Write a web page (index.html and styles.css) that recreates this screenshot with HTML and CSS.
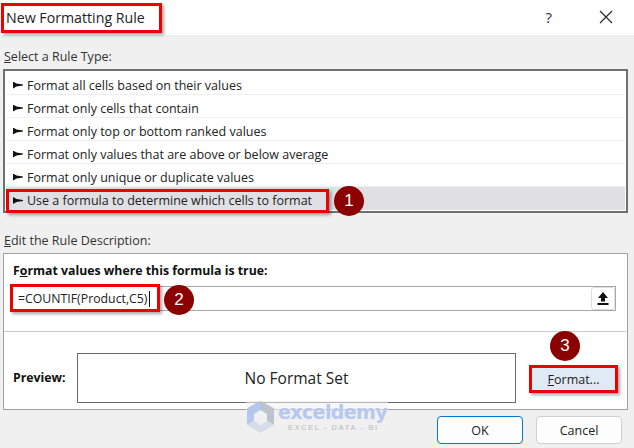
FILE: index.html
```html
<!DOCTYPE html>
<html lang="en">
<head>
<meta charset="utf-8">
<title>New Formatting Rule</title>
<link rel="stylesheet" href="styles.css">
</head>
<body>
<div class="dialog">
  <header class="titlebar">
    <span class="title">New Formatting Rule</span>
    <span class="help">?</span>
    <svg class="close" width="14" height="14" viewBox="0 0 14 14"><path d="M1 1L13 13M13 1L1 13" stroke="#222" stroke-width="1.1" fill="none"/></svg>
  </header>
  <main class="body">
    <div class="label"><u>S</u>elect a Rule Type:</div>
    <ul class="rules">
      <li class="rule"><span class="arrow"></span>Format all cells based on their values</li>
      <li class="rule"><span class="arrow"></span>Format only cells that contain</li>
      <li class="rule"><span class="arrow"></span>Format only top or bottom ranked values</li>
      <li class="rule"><span class="arrow"></span>Format only values that are above or below average</li>
      <li class="rule"><span class="arrow"></span>Format only unique or duplicate values</li>
      <li class="rule selected"><span class="arrow"></span>Use a formula to determine which cells to format</li>
    </ul>
    <div class="label second"><u>E</u>dit the Rule Description:</div>
    <section class="group">
      <div class="upper">
        <div class="strong">F<u>o</u>rmat values where this formula is true:</div>
        <div class="input">
          <span class="formula">=COUNTIF(Product,C5)<span class="caret"></span></span>
          <span class="collapse"><svg width="14" height="15" viewBox="0 0 14 15"><path d="M7 1L12 7H9V10.5H5V7H2Z M1.500 12H12.500V14H1.500Z" fill="#111"/></svg></span>
        </div>
      </div>
      <div class="lower">
        <div class="strong preview-label">Preview:</div>
        <div class="preview">No Format Set</div>
        <button class="format"><u>F</u>ormat...</button>
      </div>
    </section>
    <footer class="actions">
      <button class="btn default">OK</button>
      <button class="btn">Cancel</button>
    </footer>
  </main>
  <div class="mark box-title"></div>
  <div class="mark box-rule"></div>
  <div class="mark box-formula"></div>
  <div class="badge b1">1</div>
  <div class="badge b2">2</div>
  <div class="badge b3">3</div>
  <div class="watermark">
    <svg class="wm-logo" width="29" height="32" viewBox="0 0 29 32"><path d="M14.500 0L28 7.500V16L14.500 8.500L1 16V7.500Z" fill="#a9bfe8"/><path d="M1 7.500L14.500 0V9L8 13V20L1 24Z" fill="#b4c8ee"/><path d="M28 7.500V24L21 20V13L14.500 9V0Z" fill="#bcc3cf"/><path d="M1 24L8 20L14.500 24L21 20L28 24L14.500 32Z" fill="#d5dee8"/></svg>
    <div class="wm-text"><div class="wm-name">exceldemy</div><div class="wm-sub">EXCEL - DATA - BI</div></div>
  </div>
</div>
</body>
</html>
```
FILE: styles.css
```css
* { box-sizing: border-box; }
html, body { margin: 0; padding: 0; }
body { width: 634px; height: 448px; overflow: hidden; font-family: "Open Sans", "Noto Sans", sans-serif; font-size: 12.5px; color: #111; }
.dialog { position: relative; width: 634px; height: 448px; background: #f0f0f0; display: flex; flex-direction: column; }
.titlebar { height: 35px; background: #fff; display: flex; align-items: center; padding: 0 21px 1px 6px; flex: none; }
.title { font-size: 14.2px; flex: 1; color: #222; }
.help { font-size: 15px; margin-right: 47px; color: #333; }
.body { flex: 1; display: flex; flex-direction: column; padding: 0 6px 0 3px; }
.label { height: 34px; padding: 13px 0 0 1px; line-height: 18px; color: #333; }
.label.second { height: 40px; padding: 19px 0 0 1px; }
.rules { list-style: none; margin: 0; padding: 1px 0 3px; height: 144px; border: 2px solid #6e7072; background: #fff; }
.rule { height: 23px; border-bottom: 1px solid #efefef; margin: 0 1px; display: flex; align-items: center; padding: 4px 0 0 7px; color: #222; }
.rule.selected { background: #dfdfe4; border-bottom: 0; }
.arrow { width: 10px; height: 7px; margin-right: 4px; background: #111; clip-path: polygon(0 0, 35% 30%, 100% 42%, 100% 58%, 35% 70%, 0 100%); }
.group { height: 157px; border: 1px solid #a0a0a0; background: #fff; display: flex; flex-direction: column; }
.upper { height: 78px; border-bottom: 1px solid #ccc; margin-right: 1px; padding: 7px 10px 0 9px; }
.strong { font-weight: 700; font-size: 12.3px; color: #111; line-height: 20px; }
.input { margin-top: 5px; margin-left: -1px; height: 25px; border: 1px solid #a8a8a8; display: flex; align-items: center; justify-content: space-between; padding: 0 0 0 5px; }
.formula { display: flex; align-items: center; font-size: 12.3px; color: #222; }
.caret { display: block; width: 1px; height: 16px; background: #111; margin-left: 1px; }
.collapse { width: 24px; height: 23px; border: 1px solid #ddd; border-radius: 3px; background: #fff; display: flex; align-items: center; justify-content: center; }
.lower { flex: 1; display: flex; align-items: flex-start; padding: 21px 9px 0 9px; }
.preview-label { width: 64px; margin-top: 15px; }
.preview { width: 439px; height: 50px; border: 1px solid #6a6a6a; display: flex; align-items: center; justify-content: center; font-size: 15.5px; color: #222; margin-right: 13px; }
.format { width: 89px; height: 28px; margin-top: 12px; background: #dfeaf5; border: 3px solid #ee0000; box-shadow: 2px 2px 3px rgba(0,0,0,.35); font: inherit; color: #222; padding: 0; }
.actions { display: flex; justify-content: flex-end; gap: 13px; padding: 6px 6px 0 0; }
.btn { width: 86px; height: 28px; background: #fdfdfd; border: 1px solid #d0d0d0; border-radius: 4px; font: inherit; color: #222; padding: 0; }
.btn.default { border: 1px solid #0078d4; }
.mark { position: absolute; border: 3px solid #ee0000; box-shadow: 2px 2px 3px rgba(0,0,0,.35); }
.box-title { left: 1px; top: 3px; width: 161px; height: 30px; }
.box-rule { left: 6px; top: 189px; width: 323px; height: 24px; }
.box-formula { left: 10px; top: 284px; width: 150px; height: 28px; }
.badge { position: absolute; width: 30px; height: 30px; border-radius: 50%; background: #8b0000; color: #fff; display: flex; align-items: center; justify-content: center; font-size: 17px; font-family: "Liberation Sans", sans-serif; }
.b1 { left: 334px; top: 186px; }
.b2 { left: 164px; top: 285px; }
.b3 { left: 550px; top: 331px; }
.watermark { position: absolute; left: 246px; top: 401px; width: 142px; height: 38px; display: flex; align-items: flex-start; gap: 3px; background: rgba(240,240,240,.55); }
.wm-logo { flex: none; }
.wm-text { padding-top: 1px; }
.wm-name { font-family: "DejaVu Sans", sans-serif; font-weight: 700; font-size: 19px; letter-spacing: -0.6px; line-height: 21px; color: #b6c8ee; }
.wm-sub { font-family: "Liberation Sans", sans-serif; font-weight: 700; font-size: 7.5px; letter-spacing: 1.5px; color: #c9c9c9; line-height: 10px; padding-left: 10px; white-space: nowrap; }
```
